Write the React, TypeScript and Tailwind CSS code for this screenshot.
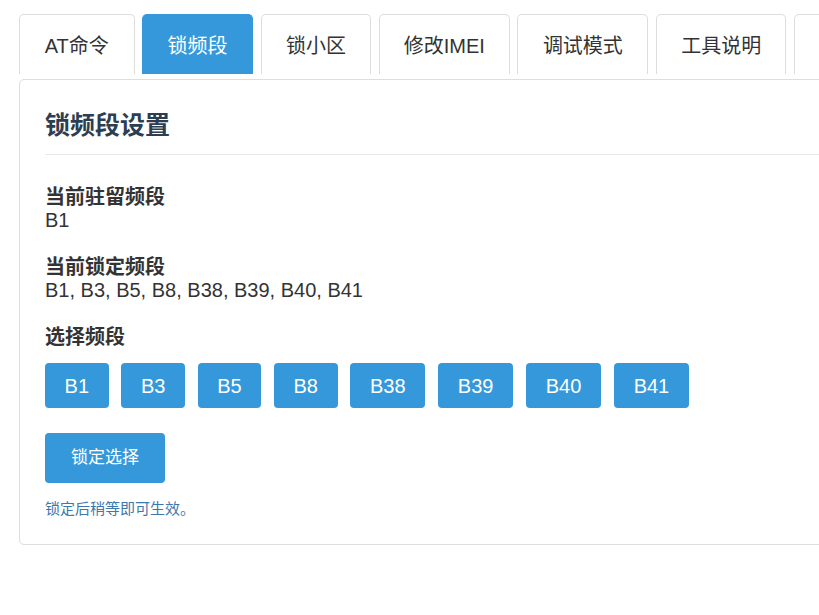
import React, { useState } from 'react';

const tabs = [
  { label: 'AT命令', w: 'w-[115.5px]' },
  { label: '锁频段', w: 'w-[111px]' },
  { label: '锁小区', w: 'w-[110.5px]' },
  { label: '修改IMEI', w: 'w-[131px]' },
  { label: '调试模式', w: 'w-[131px]' },
  { label: '工具说明', w: 'w-[130.5px]' },
  { label: '关于', w: 'w-[130px]' },
];
const bands = ['B1', 'B3', 'B5', 'B8', 'B38', 'B39', 'B40', 'B41'];

const App: React.FC = () => {
  const [active, setActive] = useState('锁频段');

  return (
    <div
      className="w-full min-h-screen overflow-hidden bg-white text-[#333]"
      style={{ fontFamily: '"Liberation Sans", Arial, "Noto Sans CJK SC", sans-serif' }}
    >
      <div className="w-[980px] pl-[19px] pt-[14px]">
        {/* tab bar */}
        <div className="flex gap-[7.6px]">
          {tabs.map((t) => (
            <button
              key={t.label}
              onClick={() => setActive(t.label)}
              className={
                t.label === active
                  ? `${t.w} shrink-0 h-[60px] pt-[3px] rounded-t-[5px] bg-[#3498db] text-white text-[20px] border border-[#3498db] border-b-0`
                  : `${t.w} shrink-0 h-[60px] pt-[3px] rounded-t-[5px] bg-white text-[#333] text-[20px] border border-[#ddd] border-b-0`
              }
            >
              {t.label}
            </button>
          ))}
        </div>

        {/* panel */}
        <div className="mt-[5px] border border-[#ddd] rounded-[5px] px-[25px] pt-[30px] pb-[25px]">
          <h2 className="text-[25px] font-bold text-[#2c3e50] leading-[30px]">锁频段设置</h2>
          <div className="mt-[14px] border-t border-[#e8e8e8]" />

          <div className="mt-[30px]">
            <div className="text-[20px] font-bold leading-[24px]">当前驻留频段</div>
            <div className="text-[20px] leading-[22px]">B1</div>
          </div>

          <div className="mt-[24px]">
            <div className="text-[20px] font-bold leading-[24px]">当前锁定频段</div>
            <div className="text-[20px] leading-[22px]">B1, B3, B5, B8, B38, B39, B40, B41</div>
          </div>

          <div className="mt-[24px]">
            <div className="text-[20px] font-bold leading-[24px]">选择频段</div>
            <div className="mt-[14px] flex gap-[12.6px]">
              {bands.map((b) => (
                <button
                  key={b}
                  className={`h-[45px] shrink-0 rounded-[4px] bg-[#3498db] text-white text-[20px] ${b.length > 2 ? 'w-[75.3px]' : 'w-[63.7px]'}`}
                >
                  {b}
                </button>
              ))}
            </div>
          </div>

          <button className="mt-[25px] h-[50px] w-[120px] rounded-[4px] bg-[#3498db] text-white text-[17px]">
            锁定选择
          </button>

          <p className="mt-[16px] text-[15px] text-[#3d78ad] leading-[20px]">锁定后稍等即可生效。</p>
        </div>
      </div>
    </div>
  );
};

export default App;
